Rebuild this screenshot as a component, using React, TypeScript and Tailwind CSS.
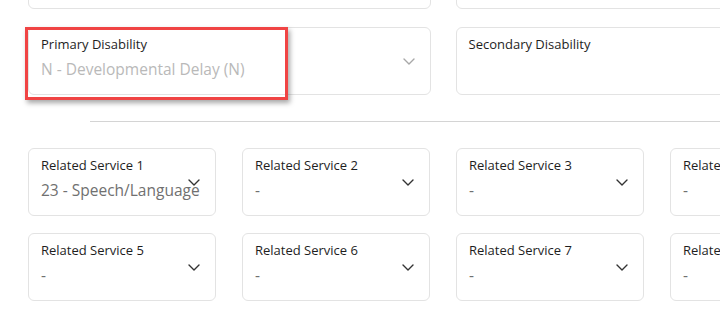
import React from "react";

const Chevron = ({ className }: { className: string }) => (
  <svg viewBox="0 0 12 7" width="12" height="7" className={className} fill="none" stroke="currentColor" strokeWidth="1.4" strokeLinecap="round" strokeLinejoin="round">
    <path d="M1 1l5 5 5-5" />
  </svg>
);

const Field = ({ label, value, faded, chevron = true }: { label: string; value?: string; faded?: boolean; chevron?: boolean }) => (
  <div className="relative h-[68px] rounded-[6px] border border-[#e3e3e3] bg-white px-[12px] pt-[7px]">
    <div className="text-[13px] leading-[18px] text-[#1e1e1e]">{label}</div>
    {value !== undefined && (
      <div className={`mt-[5px] whitespace-nowrap text-[15.5px] leading-[22px] ${faded ? "text-[#b9b9b9]" : "text-[#707070]"}`}>{value}</div>
    )}
    {chevron && (
      <Chevron className={`absolute right-[15px] top-[30px] ${faded ? "text-[#a8a8a8]" : "text-[#333333]"}`} />
    )}
  </div>
);

export default function App() {
  const services1 = [
    ["Related Service 1", "23 - Speech/Language"],
    ["Related Service 2", "-"],
    ["Related Service 3", "-"],
    ["Related Service 4", "-"],
  ];
  const services2 = [
    ["Related Service 5", "-"],
    ["Related Service 6", "-"],
    ["Related Service 7", "-"],
    ["Related Service 8", "-"],
  ];
  return (
    <div className="relative h-[318px] w-[720px] overflow-hidden bg-white" style={{ fontFamily: '"Open Sans", "Noto Sans", sans-serif' }}>
      <div className="flex h-full">
        <div className="ml-[11px] h-full w-px bg-[#d9d9d9]" />
        <div className="ml-[17px] flex w-[830px] shrink-0 flex-col">
          <div className="-mt-[59px] grid grid-cols-2 gap-x-[25px]">
            <div className="h-[68px] rounded-[6px] border border-[#e3e3e3]" />
            <div className="h-[68px] rounded-[6px] border border-[#e3e3e3]" />
          </div>
          <div className="mt-[18px] grid grid-cols-2 gap-x-[25px]">
            <Field label="Primary Disability" value="N - Developmental Delay (N)" faded />
            <Field label="Secondary Disability" chevron={false} />
          </div>
          <div className="ml-[62px] mt-[26px] h-px bg-[#d4d4d4]" />
          <div className="mt-[26px] grid grid-cols-4 gap-x-[26px]">
            {services1.map(([l, v]) => (
              <Field key={l} label={l} value={v} />
            ))}
          </div>
          <div className="mt-[17px] grid grid-cols-4 gap-x-[26px]">
            {services2.map(([l, v]) => (
              <Field key={l} label={l} value={v} />
            ))}
          </div>
        </div>
      </div>
      <div className="pointer-events-none absolute left-[25px] top-[27px] h-[73px] w-[263px] border-[3px] border-[#f04444] shadow-[2px_3px_5px_rgba(0,0,0,0.35)]" />
    </div>
  );
}
